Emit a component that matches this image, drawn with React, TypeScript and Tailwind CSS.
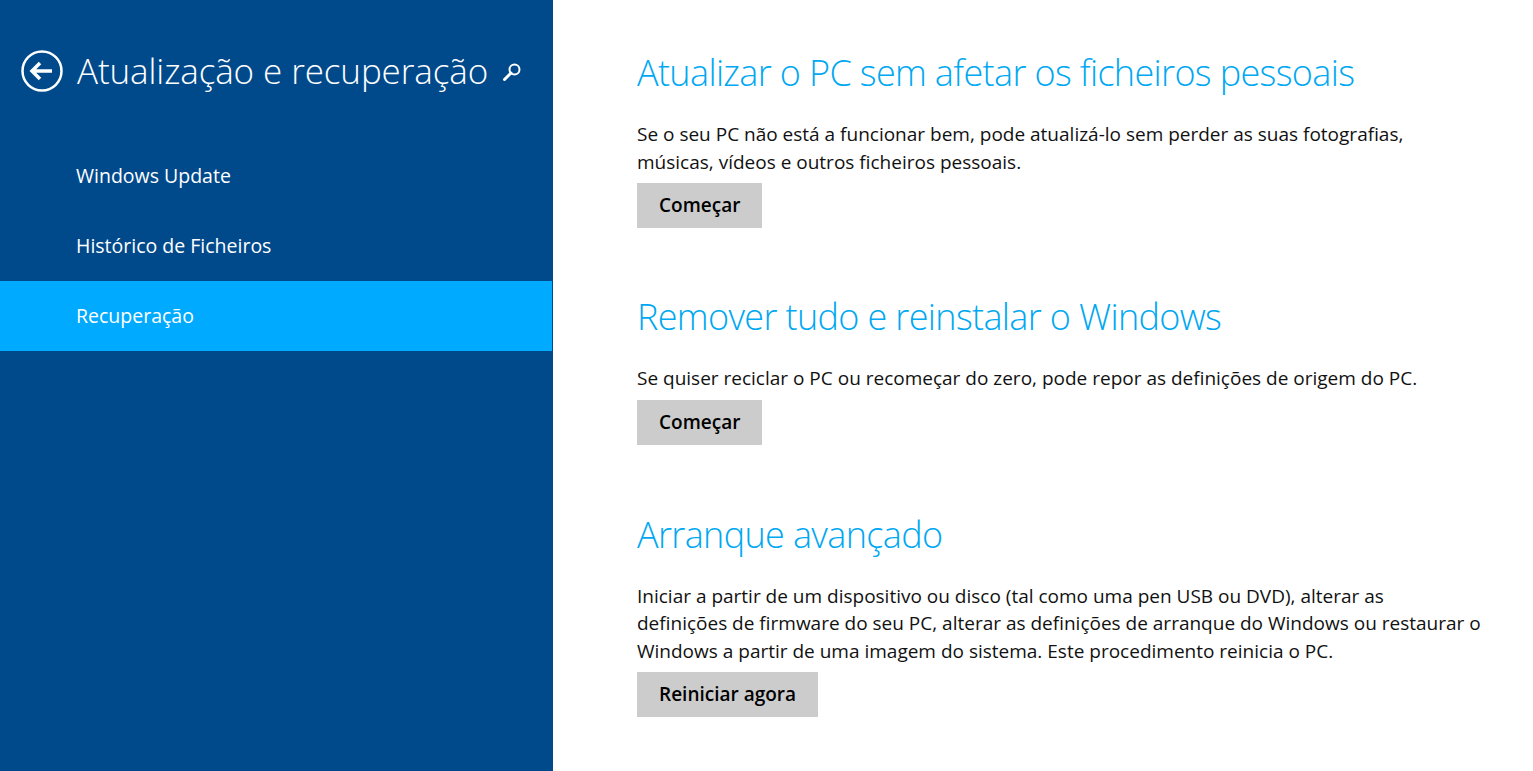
import React from "react";

const FONT = { fontFamily: '"Open Sans", "Noto Sans", sans-serif' };

function BackIcon() {
  return (
    <svg width="42" height="42" viewBox="0 0 42 42" fill="none" stroke="white">
      <circle cx="21" cy="21" r="19.5" strokeWidth="2.5" />
      <path d="M11 21h20M19 13l-8 8 8 8" strokeWidth="3.5" strokeLinejoin="miter" />
    </svg>
  );
}

function SearchIcon() {
  return (
    <svg width="20" height="20" viewBox="0 0 20 20" fill="none" stroke="white">
      <circle cx="12.5" cy="7.5" r="5" strokeWidth="2" />
      <path d="M9 11l-6.5 6.5" strokeWidth="3" strokeLinecap="round" />
    </svg>
  );
}

const NAV = ["Windows Update", "Histórico de Ficheiros", "Recuperação"];

function Section({
  title,
  lines,
  button,
  className,
}: {
  title: string;
  lines: string[];
  button: string;
  className?: string;
}) {
  return (
    <section className={className}>
      <h2 className="text-[36px] font-light leading-[48px] text-[#00a8f2] tracking-[-0.65px]">{title}</h2>
      <p className="mt-[24px] text-[19px] leading-[27.5px] text-[#111]">
        {lines.map((l, i) => (
          <React.Fragment key={i}>
            {l}
            {i < lines.length - 1 && <br />}
          </React.Fragment>
        ))}
      </p>
      <button className="mt-[7px] h-[45px] px-[22px] bg-[#cccccc] text-[19px] font-semibold text-black">
        {button}
      </button>
    </section>
  );
}

export default function App() {
  return (
    <div className="flex w-[1533px] h-[771px] bg-white overflow-hidden" style={FONT}>
      <aside className="w-[553px] shrink-0 bg-[#004a8c] flex flex-col">
        <div className="flex items-center h-[48px] mt-[47px] pl-[21px]">
          <BackIcon />
          <h1 className="ml-[14px] text-[35px] font-light text-white leading-[48px] tracking-[-0.1px]">
            Atualização e recuperação
          </h1>
          <div className="ml-[14px] mt-[2px]">
            <SearchIcon />
          </div>
        </div>
        <nav className="mt-[46px] flex flex-col">
          {NAV.map((n, i) => (
            <div
              key={n}
              className={`h-[70px] flex items-center pl-[76px] text-[19.5px] text-white ${
                i === 2 ? "bg-[#00aaff] mr-[1px]" : ""
              }`}
            >
              {n}
            </div>
          ))}
        </nav>
      </aside>
      <main className="flex-1 pl-[84px] pt-[49px]">
        <Section
          title="Atualizar o PC sem afetar os ficheiros pessoais"
          lines={[
            "Se o seu PC não está a funcionar bem, pode atualizá-lo sem perder as suas fotografias,",
            "músicas, vídeos e outros ficheiros pessoais.",
          ]}
          button="Começar"
        />
        <Section
          className="mt-[65px]"
          title="Remover tudo e reinstalar o Windows"
          lines={[
            "Se quiser reciclar o PC ou recomeçar do zero, pode repor as definições de origem do PC.",
          ]}
          button="Começar"
        />
        <Section
          className="mt-[66px]"
          title="Arranque avançado"
          lines={[
            "Iniciar a partir de um dispositivo ou disco (tal como uma pen USB ou DVD), alterar as",
            "definições de firmware do seu PC, alterar as definições de arranque do Windows ou restaurar o",
            "Windows a partir de uma imagem do sistema. Este procedimento reinicia o PC.",
          ]}
          button="Reiniciar agora"
        />
      </main>
    </div>
  );
}
